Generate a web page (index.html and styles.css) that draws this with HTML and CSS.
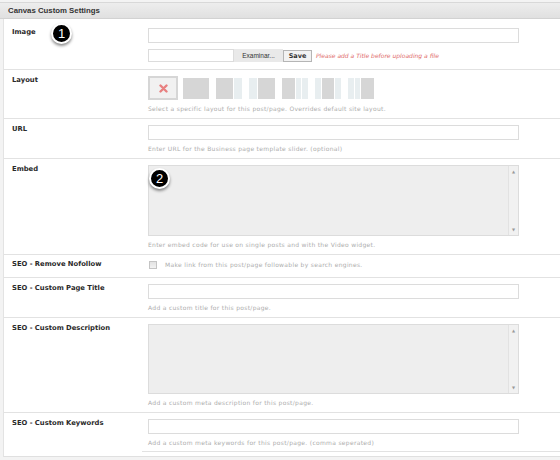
FILE: index.html
```html
<!DOCTYPE html>
<html>
<head>
<meta charset="utf-8">
<link rel="stylesheet" href="styles.css">
</head>
<body>
<div class="panel">
  <div class="panel-head">Canvas Custom Settings</div>
  <div class="panel-body">
    <div class="row row-first">
      <div class="label">Image</div>
      <div class="field">
        <input class="text" type="text">
        <div class="upload">
          <span class="file-name"></span>
          <span class="file-btn">Examinar...</span>
          <span class="save">Save</span>
          <span class="warn">Please add a Title before uploading a file</span>
        </div>
      </div>
    </div>
    <div class="row">
      <div class="label">Layout</div>
      <div class="field">
        <div class="layouts">
          <span class="lay selected">
            <svg width="9" height="9" viewBox="0 0 9 9"><path d="M1.5 1.5 L7.5 7.5 M7.5 1.5 L1.5 7.5" stroke="#e88080" stroke-width="2.4" stroke-linecap="round"/></svg>
          </span>
          <span class="lay"><i class="d w26"></i></span>
          <span class="lay"><i class="d w17"></i><i class="l w8"></i></span>
          <span class="lay"><i class="l w8"></i><i class="d w17"></i></span>
          <span class="lay"><i class="d w13"></i><i class="l w5"></i><i class="l w6"></i></span>
          <span class="lay"><i class="l w6"></i><i class="d w12"></i><i class="l w6"></i></span>
          <span class="lay"><i class="l w6"></i><i class="l w5"></i><i class="d w13"></i></span>
        </div>
        <div class="help">Select a specific layout for this post/page. Overrides default site layout.</div>
      </div>
    </div>
    <div class="row">
      <div class="label">URL</div>
      <div class="field">
        <input class="text" type="text">
        <div class="help">Enter URL for the Business page template slider. (optional)</div>
      </div>
    </div>
    <div class="row">
      <div class="label">Embed</div>
      <div class="field">
        <div class="area area-embed"><div class="track"><span class="arrow">&#9650;</span><span class="arrow">&#9660;</span></div></div>
        <div class="help">Enter embed code for use on single posts and with the Video widget.</div>
      </div>
    </div>
    <div class="row row-check">
      <div class="label">SEO - Remove Nofollow</div>
      <div class="field">
        <div class="check-line"><span class="checkbox"></span><span class="check-text">Make link from this post/page followable by search engines.</span></div>
      </div>
    </div>
    <div class="row">
      <div class="label">SEO - Custom Page Title</div>
      <div class="field">
        <input class="text" type="text">
        <div class="help">Add a custom title for this post/page.</div>
      </div>
    </div>
    <div class="row">
      <div class="label">SEO - Custom Description</div>
      <div class="field">
        <div class="area area-desc"><div class="track"><span class="arrow">&#9650;</span><span class="arrow">&#9660;</span></div></div>
        <div class="help">Add a custom meta description for this post/page.</div>
      </div>
    </div>
    <div class="row row-last">
      <div class="label">SEO - Custom Keywords</div>
      <div class="field">
        <input class="text" type="text">
        <div class="help">Add a custom meta keywords for this post/page. (comma seperated)</div>
      </div>
    </div>
  </div>
  <span class="badge badge-1">1</span>
  <span class="badge badge-2">2</span>
</div>
</body>
</html>
```

FILE: styles.css
```css
html, body {
  margin: 0;
  padding: 0;
}
body {
  background: #f3f3f3;
  font-family: "DejaVu Sans", Verdana, sans-serif;
  color: #333;
}
.panel {
  position: relative;
  padding-top: 2px;
}
.panel-head {
  background: linear-gradient(#ededed, #e0e0e0);
  border-top: 1px solid #d8d8d8;
  border-bottom: 1px solid #d2d2d2;
  height: 15px;
  line-height: 15px;
  padding-left: 8px;
  font-family: "Liberation Sans", Arial, sans-serif;
  font-weight: bold;
  font-size: 7.8px;
  color: #333;
}
.panel-body {
  margin-left: 3px;
  background: #fff;
  border-left: 1px solid #e3e3e3;
  border-bottom: 1px solid #e0e0e0;
  padding-bottom: 4px;
}
.row {
  display: flex;
  padding: 6px 0 5px;
  border-bottom: 1px solid #e2e2e2;
}
.row-first {
  padding-top: 9px;
  padding-bottom: 7px;
}
.row-check {
  padding-top: 5px;
}
.row-last {
  border-bottom: none;
  padding-bottom: 0;
}
.row-last .field {
  border-bottom: 1px solid #e2e2e2;
  padding-bottom: 4px;
}
.label {
  width: 130px;
  flex: none;
  padding-left: 8px;
  font-weight: bold;
  font-size: 6.8px;
  line-height: 9px;
  color: #2a2a2a;
}
.field {
  flex: 1;
  padding-left: 6px;
}
.text {
  display: block;
  box-sizing: border-box;
  width: 371px;
  height: 15px;
  margin: 0;
  padding: 0;
  border: 1px solid #dcdcdc;
  background: #fff;
}
.help {
  margin-top: 4px;
  font-size: 6px;
  letter-spacing: 0.3px;
  line-height: 9px;
  color: #adadad;
}
.upload {
  display: flex;
  align-items: center;
  height: 13px;
  margin-top: 6px;
}
.file-name {
  box-sizing: border-box;
  width: 86px;
  height: 13px;
  border: 1px solid #dcdcdc;
  background: #fff;
}
.file-btn {
  box-sizing: border-box;
  width: 49px;
  height: 13px;
  line-height: 13px;
  background: #e9e9e9;
  text-align: center;
  font-family: "Liberation Sans", Arial, sans-serif;
  font-size: 6.5px;
  color: #333;
}
.save {
  box-sizing: border-box;
  height: 12px;
  width: 29px;
  margin-top: 1px;
  border: 1px solid #b5b5b5;
  background: #f2f2f2;
  text-align: center;
  line-height: 10px;
  font-weight: bold;
  font-size: 6.5px;
  color: #333;
}
.warn {
  margin-left: 4px;
  font-style: italic;
  font-size: 6px;
  color: #e06a6a;
}
.layouts {
  display: flex;
  align-items: center;
  gap: 7px;
  height: 24px;
  margin-bottom: 1px;
}
.lay {
  display: flex;
  gap: 1px;
  width: 26px;
  height: 21px;
}
.lay.selected {
  box-sizing: border-box;
  width: 30px;
  height: 24px;
  margin-right: -2px;
  border: 2px solid #d6d6d6;
  background: #f1f1f1;
  align-items: center;
  justify-content: center;
}
.lay i {
  display: block;
  height: 100%;
}
.d { background: #d6d6d6; }
.l { background: #e8eef0; }
.w26 { width: 26px; }
.w17 { width: 17px; }
.w13 { width: 13px; }
.w12 { width: 12px; }
.w8 { width: 8px; }
.w6 { width: 6px; }
.w5 { width: 5px; }
.area {
  box-sizing: border-box;
  width: 371px;
  border: 1px solid #dcdcdc;
  background: #eeeeee;
  display: flex;
  justify-content: flex-end;
}
.area-embed { height: 71px; }
.area-desc { height: 70px; }
.track {
  width: 9px;
  border-left: 1px solid #e2e2e2;
  background: #f1f1f1;
  display: flex;
  flex-direction: column;
  justify-content: space-between;
  align-items: center;
  padding: 4px 0 3px;
}
.arrow {
  font-size: 4px;
  line-height: 4px;
  color: #999;
}
.check-line {
  display: flex;
  align-items: center;
  height: 9px;
  margin-bottom: 3px;
}
.checkbox {
  box-sizing: border-box;
  width: 8px;
  height: 8px;
  margin-left: 1px;
  border: 1px solid #c4c4c4;
  background: linear-gradient(#e2e2e2, #f2f2f2);
}
.check-text {
  margin-left: 8px;
  font-size: 6px;
  letter-spacing: 0.3px;
  color: #adadad;
}
.badge {
  position: absolute;
  box-sizing: border-box;
  width: 21px;
  height: 21px;
  border-radius: 50%;
  border: 2px solid #fff;
  background: #000;
  color: #fff;
  font-family: "Liberation Sans", Arial, sans-serif;
  font-size: 13px;
  line-height: 17px;
  text-align: center;
  box-shadow: 0 2px 3px rgba(0,0,0,0.45);
}
.badge-1 {
  left: 51px;
  top: 23px;
}
.badge-2 {
  left: 149px;
  top: 168px;
}
```
